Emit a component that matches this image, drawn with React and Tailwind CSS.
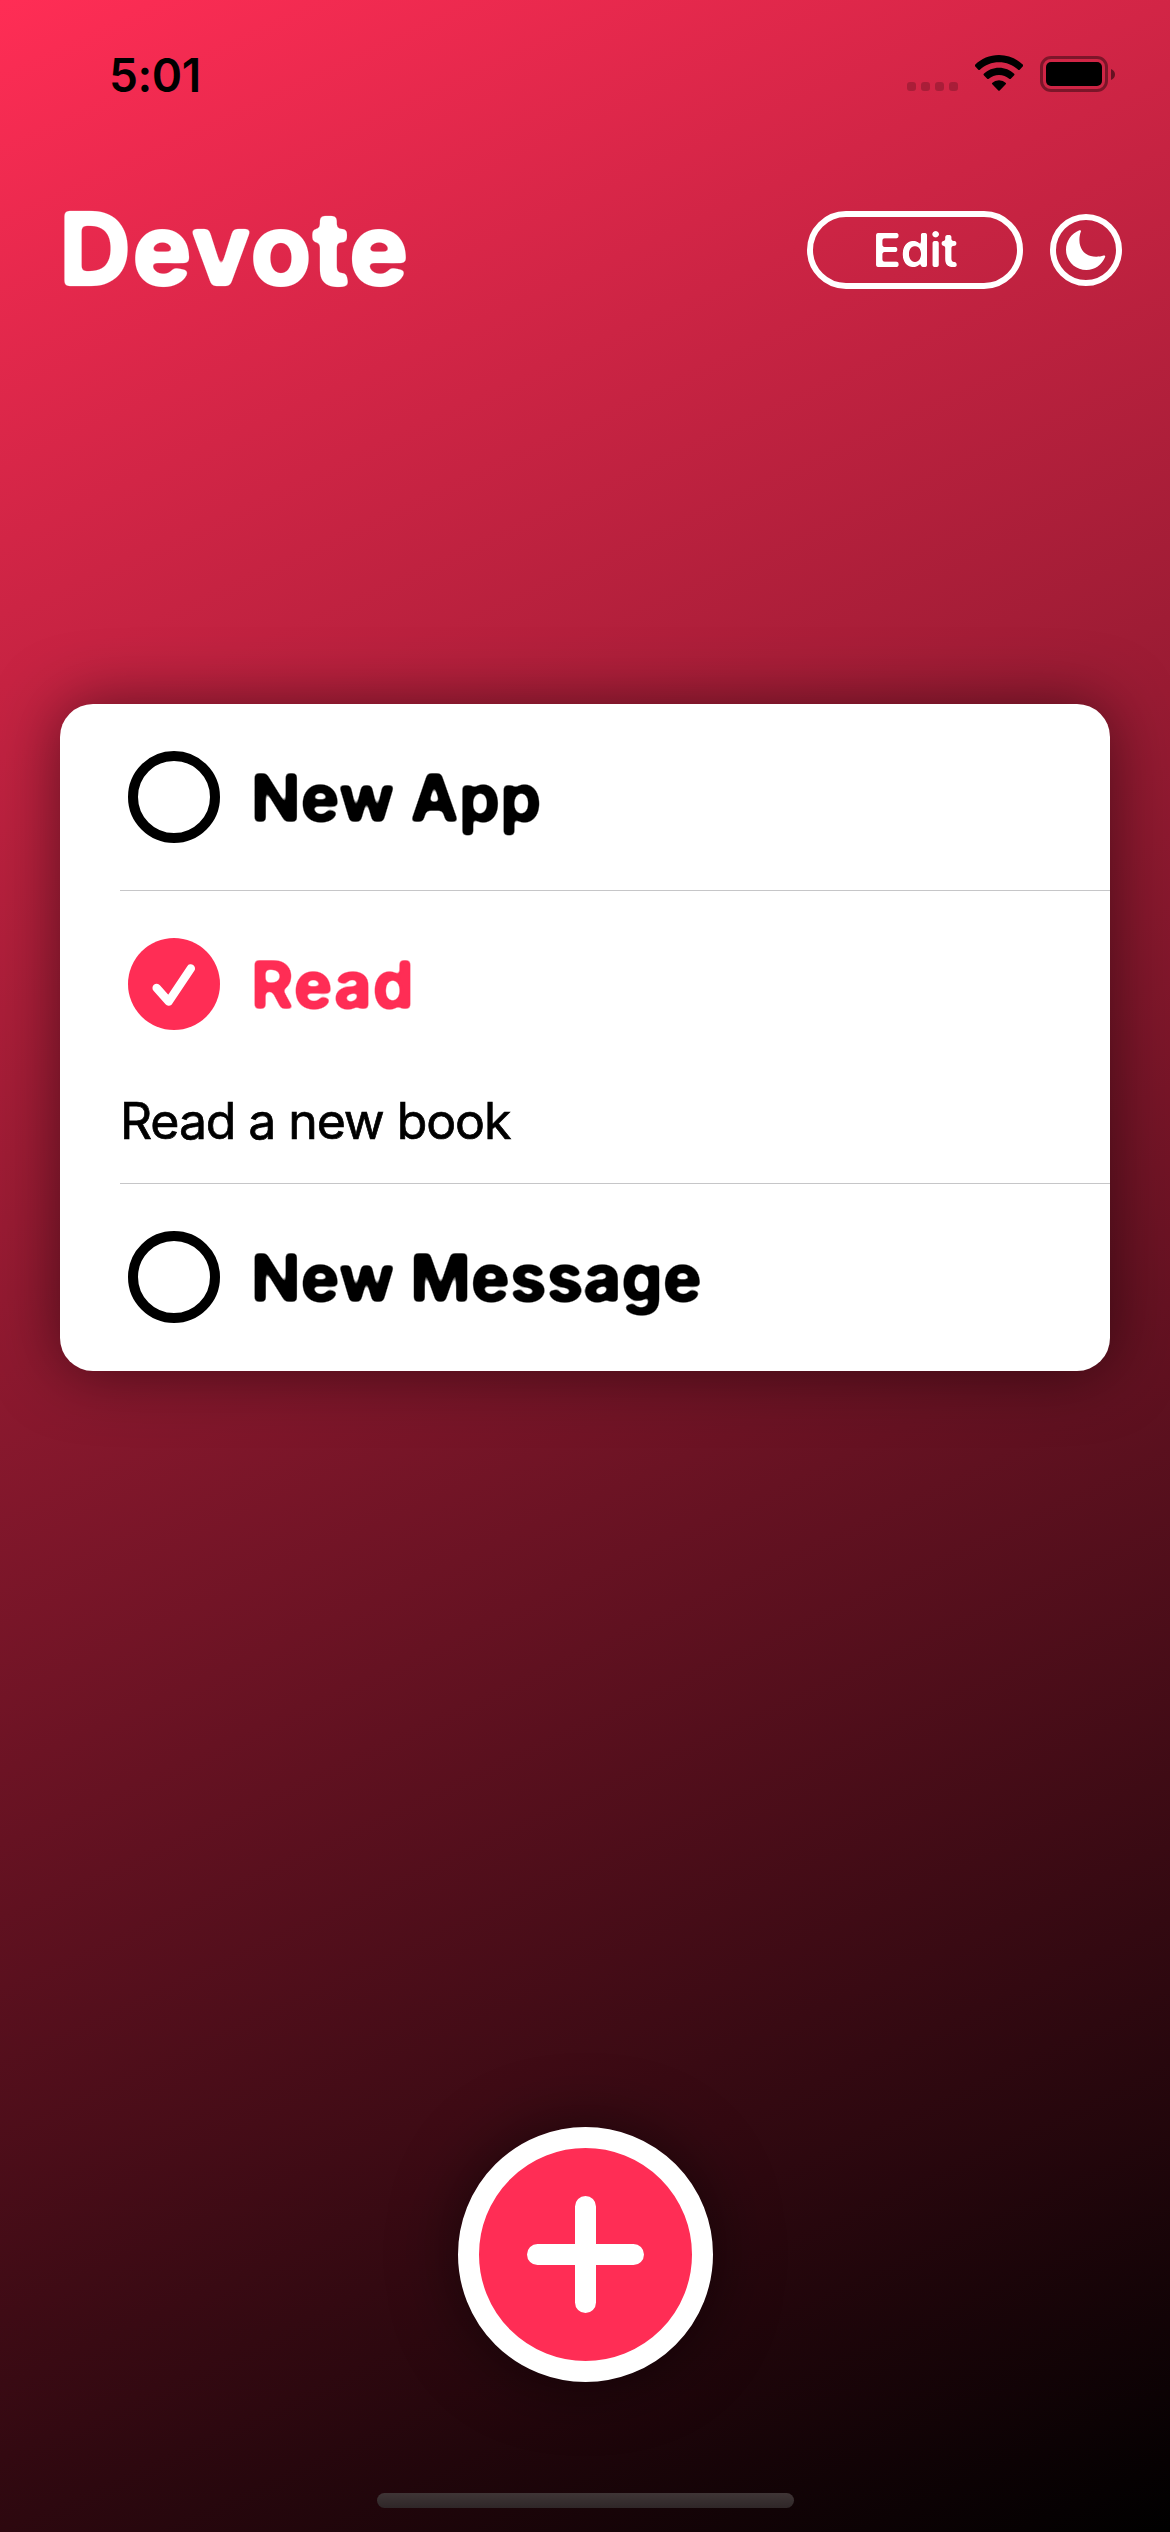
function Rounding({ id, blur, gain, offset }) {
  return (
    <filter id={id} x="-5%" y="-5%" width="110%" height="110%" colorInterpolationFilters="sRGB">
      <feGaussianBlur stdDeviation={blur} />
      <feComponentTransfer>
        <feFuncA type="linear" slope={gain} intercept={offset} />
      </feComponentTransfer>
    </filter>
  );
}

function StatusBar() {
  return (
    <header className="flex h-[150px] items-start justify-between pl-[109px] pr-[55px] pt-[55px] text-black">
      <span className="mt-[-7px] text-[46px] font-semibold leading-[54px] tracking-[-0.4px]">5:01</span>
      <div className="flex">
        <div className="mt-[27px] flex gap-[5px]">
          {[0, 1, 2, 3].map((dot) => (
            <span key={dot} className="size-[9px] rounded-[3px] bg-black/20" />
          ))}
        </div>
        <svg className="ml-[17px] h-[36px] w-[48px]" viewBox="0 0 48 36">
          <path d="M24 0C33.300 0 41.800 3.600 48 9.800Q48.500 10.600 47.900 11.300L44.700 14.700Q43.900 15.400 43.100 14.700C38 9.900 31.300 7.300 24 7.300S10 9.900 4.900 14.700Q4.100 15.400 3.300 14.700L.1 11.300Q-.5 10.600.1 9.800C6.200 3.600 14.700 0 24 0Z" />
          <path d="M24 12.700C29.800 12.700 35.200 15 39.200 18.700Q39.900 19.500 39.200 20.300L35.800 23.700Q35 24.400 34.200 23.700C31.400 21.400 27.900 20 24 20S16.600 21.400 13.800 23.700Q13 24.400 12.200 23.700L8.800 20.300Q8.100 19.500 8.800 18.700C12.800 15 18.200 12.700 24 12.700Z" />
          <path d="M24 25.200Q28.200 25.200 30.900 28Q31.300 28.700 30.700 29.200L24.700 35.500Q24 36.200 23.300 35.500L17.300 29.200Q16.700 28.700 17.100 28Q19.800 25.200 24 25.200Z" />
        </svg>
        <div className="ml-[17px] mt-px h-[36px] w-[68px] rounded-[11px] border-3 border-black/40 p-[3px]">
          <div className="size-full rounded-[5px] bg-black" />
        </div>
        <svg className="ml-[3px] mt-[14px] h-[11px] w-[4px] opacity-50" viewBox="0 0 4 11">
          <path d="M0 0Q4 1.800 4 5.500T0 11Z" />
        </svg>
      </div>
    </header>
  );
}

function Toolbar() {
  return (
    <nav className="flex h-[200px] items-start pl-[59px] pr-[48px] pt-[61px] text-white">
      <h1 className="mt-[-22px] flex-1 text-[100px] font-bold leading-[120px] tracking-[1px] [-webkit-text-stroke:2px_white] [filter:url(#round-lg)]">Devote</h1>
      <button className="h-[78px] w-[216px] rounded-full border-6 border-white">
        <span className="block text-[47px] font-semibold leading-[66px] tracking-[-0.6px] [filter:url(#round-sm)]">Edit</span>
      </button>
      <button className="ml-[27px] mt-[3px] flex size-[72px] items-center justify-center rounded-full border-6 border-white">
        <svg className="size-[40px]" viewBox="0 0 40 40" fill="currentColor">
          <path d="M13.400.3C14.500-.2 15.300.5 14.900 1.600C13.800 4.300 13.400 7.300 13.400 10C13.400 20 20 26.800 30.200 26.800C33 26.800 35.300 26.400 37.600 25.600C38.800 25.200 39.500 26 39.100 27C36 34.800 28.800 40 20.400 40C9 40 0 31 0 19.800C0 11.300 5.300 3.400 13.400.3Z" />
        </svg>
      </button>
    </nav>
  );
}

function Item({ title, done }) {
  return (
    <div className="flex h-[186px] items-center pl-[68px]">
      {done ? (
        <span className="flex size-[92px] items-center justify-center rounded-full bg-[#ff2d55]">
          <svg className="size-[92px]" viewBox="0 0 92 92" fill="none" stroke="white" strokeWidth="8.500" strokeLinecap="round" strokeLinejoin="round">
            <path d="M28.700 50L40.700 63.500L62.800 30.500" />
          </svg>
        </span>
      ) : (
        <span className="size-[92px] rounded-full border-10 border-black" />
      )}
      <span className={done ? "ml-[31px] mt-[2px] text-[65px] font-bold leading-[78px] tracking-[0.9px] text-[#ff2d55] [-webkit-text-stroke:1.300px_currentColor] [filter:url(#round-md)]" : "ml-[31px] mt-[2px] text-[65px] font-bold leading-[78px] tracking-[0.3px] text-black [-webkit-text-stroke:1.300px_currentColor] [filter:url(#round-md)]"}>
        {title}
      </span>
    </div>
  );
}

export default function App() {
  return (
    <div className="flex h-[2532px] w-[1170px] flex-col overflow-hidden bg-[linear-gradient(155.2deg,#ff2d55,#000)] font-['Inter',sans-serif]">
      <svg className="absolute size-0" aria-hidden="true">
        <defs>
          <Rounding id="round-lg" blur="2.900" gain="6" offset="-2.400" />
          <Rounding id="round-md" blur="1.900" gain="4.500" offset="-1.750" />
          <Rounding id="round-sm" blur="1.300" gain="3.500" offset="-1.200" />
        </defs>
      </svg>
      <StatusBar />
      <Toolbar />
      <main className="mx-[60px] mt-[354px] h-[667px] rounded-[33px] bg-white shadow-[0_0_64px_rgba(0,0,0,0.5)]">
        <Item title="New App" />
        <div className="ml-[60px] h-px bg-[#c6c6c8]" />
        <div className="h-[292px]">
          <Item title="Read" done />
          <p className="ml-[60px] mt-[14px] text-[50px] leading-[60px] tracking-[-1.100px] text-black [-webkit-text-stroke:0.700px_black]">Read a new book</p>
        </div>
        <div className="ml-[60px] h-px bg-[#c6c6c8]" />
        <Item title="New Message" />
      </main>
      <div className="mt-[756px] flex justify-center pl-px">
        <button className="flex size-[255px] items-center justify-center rounded-full border-[21px] border-white bg-[#ff2d55] shadow-[0_0_64px_rgba(0,0,0,0.5)]">
          <svg className="size-[117px]" viewBox="0 0 117 117" stroke="white" strokeWidth="21" strokeLinecap="round">
            <path d="M58.500 10.500V106.500M10.500 58.500H106.500" />
          </svg>
        </button>
      </div>
      <div className="mx-auto mt-[111px] h-[15px] w-[417px] rounded-full bg-gradient-to-b from-[#3f3536] to-[#2f2728]" />
    </div>
  );
}
